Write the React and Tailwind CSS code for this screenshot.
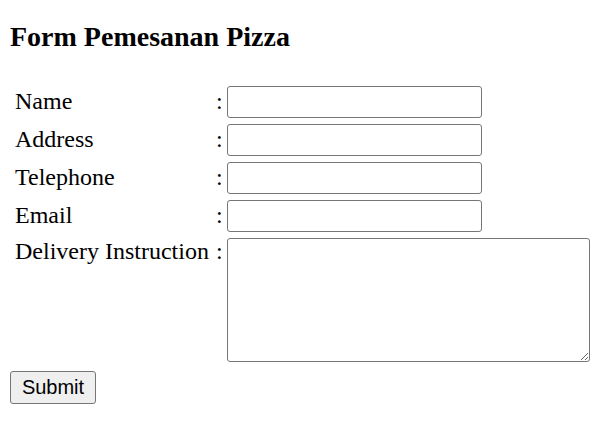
export default function App() {
  const rows = ["Name", "Address", "Telephone", "Email"];
  return (
    <div className="bg-white w-[614px] h-[426px] pt-[21px] pl-[10px] text-black" style={{ fontFamily: '"Liberation Serif", "Times New Roman", serif' }}>
      <h2 className="text-[28px] leading-[32px] font-bold">Form Pemesanan Pizza</h2>
      <div className="mt-[33px] flex flex-col gap-[6px]">
        {rows.map((r) => (
          <div key={r} className="flex items-start h-[32px]">
            <div className="ml-[5px] w-[198px] pt-[1px] text-[24px] leading-[28px] whitespace-nowrap">{r}</div>
            <div className="w-[12px] pl-[3px] pt-[1px] text-[24px] leading-[28px]">:</div>
            <input type="text" className="ml-[2px] w-[255px] h-[32px] border border-[#767676] rounded-[3px] bg-white outline-none" />
          </div>
        ))}
        <div className="flex items-start">
          <div className="ml-[5px] w-[198px] text-[24px] leading-[26px] whitespace-nowrap">Delivery Instruction</div>
          <div className="w-[12px] pl-[3px] text-[24px] leading-[26px]">:</div>
          <textarea className="ml-[2px] w-[363px] h-[124px] border border-[#767676] rounded-[3px] bg-white outline-none block" />
        </div>
      </div>
      <button className="mt-[9px] w-[86px] h-[33px] bg-[#efefef] border border-[#767676] rounded-[3px] text-[20px] leading-[23px] flex items-center justify-center" style={{ fontFamily: '"Liberation Sans", Arial, sans-serif' }}>Submit</button>
    </div>
  );
}
